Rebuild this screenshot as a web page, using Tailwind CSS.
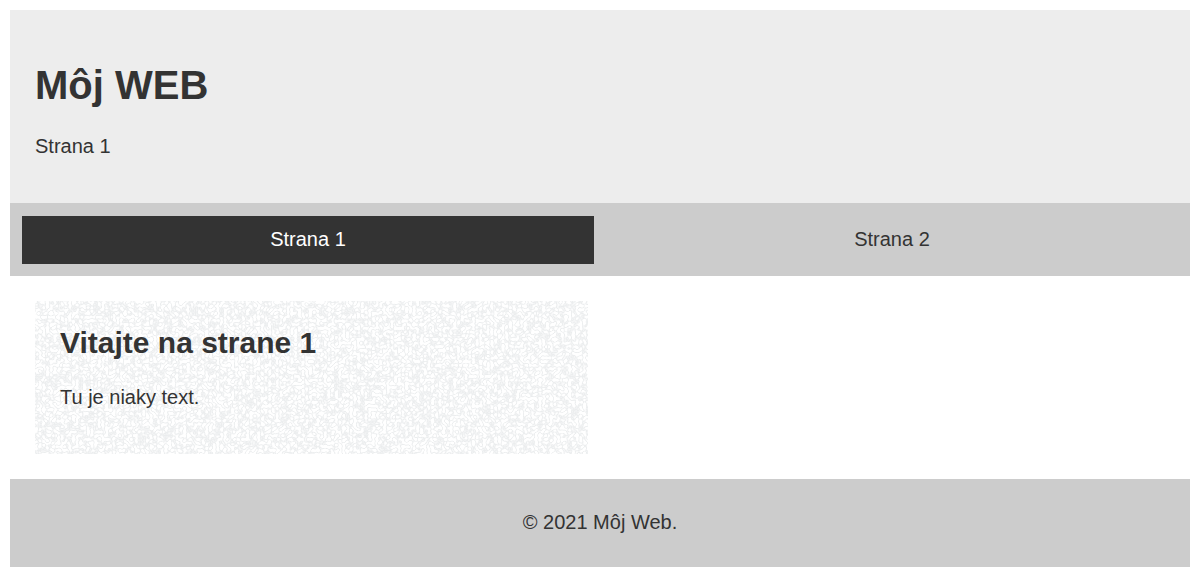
<!DOCTYPE html>
<html lang="sk">
<head>
<meta charset="utf-8">
<meta name="viewport" content="width=device-width, initial-scale=1">
<title>Môj Web</title>
<script src="https://cdn.jsdelivr.net/npm/@tailwindcss/browser@4"></script>
</head>
<body class="m-[10px] bg-white font-['Liberation_Sans',Arial,sans-serif] text-[20px] leading-6 text-[#333]">
  <header class="bg-[#ededed] px-[25px] pt-[50px] pb-[45px]">
    <h1 class="text-[40px] leading-[50px] font-bold">Môj WEB</h1>
    <p class="mt-6">Strana 1</p>
  </header>
  <nav class="grid grid-cols-2 gap-3 bg-[#ccc] px-3 pt-[13px] pb-3">
    <a href="#strana1" aria-current="page" class="bg-[#333] px-3 pt-[11px] pb-[13px] text-center text-white">Strana 1</a>
    <a href="#strana2" class="px-3 pt-[11px] pb-[13px] text-center">Strana 2</a>
  </nav>
  <main class="grid grid-cols-2 gap-[25px] p-[25px]">
    <article id="strana1" class="relative isolate px-[25px] pt-6 pb-[45px]">
      <svg class="absolute inset-0 -z-10 size-full" aria-hidden="true">
        <filter id="texture" x="0" y="0" width="100%" height="100%" color-interpolation-filters="sRGB">
          <feTurbulence type="fractalNoise" baseFrequency="0.27" numOctaves="1" seed="4"/>
          <feColorMatrix values="0 0 0 0 0.92  0 0 0 0 0.93  0 0 0 0 0.934  1 0 0 0 0"/>
          <feComponentTransfer><feFuncA type="table" tableValues="0 0 0 0 1 0 0 0 0"/></feComponentTransfer>
        </filter>
        <rect width="100%" height="100%" filter="url(#texture)"/>
      </svg>
      <h2 class="text-[30px] leading-9 font-bold">Vitajte na strane 1</h2>
      <p class="mt-6">Tu je niaky text.</p>
    </article>
  </main>
  <footer class="bg-[#ccc] px-[25px] pt-[31px] pb-[33px] text-center">
    <p>© 2021 Môj Web.</p>
  </footer>
</body>
</html>
